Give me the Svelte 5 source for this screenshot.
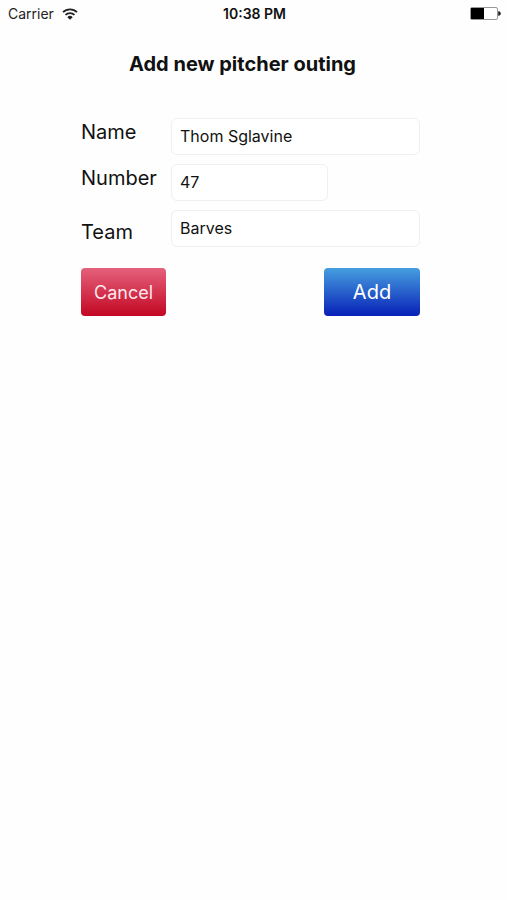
<script>
  let name = $state('Thom Sglavine');
  let number = $state('47');
  let team = $state('Barves');

  function clearForm() {
    name = '';
    number = '';
    team = '';
  }

  function handleSubmit(event) {
    event.preventDefault();
  }
</script>

<div class="screen">
  <header class="status-bar">
    <div class="carrier">
      <span>Carrier</span>
      <svg class="wifi" viewBox="0 0 16 12" aria-hidden="true">
        <path d="M1 4.2a9.9 9.9 0 0 1 14 0M3.5 6.9a6.4 6.4 0 0 1 9 0" fill="none" stroke="currentColor" stroke-width="1.8" />
        <path d="M8 11.8 5.3 9.2a3.8 3.8 0 0 1 5.4 0z" fill="currentColor" />
      </svg>
    </div>
    <span class="time">10:38 PM</span>
    <svg class="battery" viewBox="0 0 31 13" aria-hidden="true">
      <rect x="0.5" y="0.5" width="27" height="12" rx="1.5" fill="#fff" stroke="#999" />
      <rect x="1" y="1" width="13" height="11" fill="#000" />
      <path d="M28.5 4.5a2 2 0 0 1 0 4z" fill="#222" stroke="#222" stroke-width="0.6" />
    </svg>
  </header>

  <main>
    <h1>Add new pitcher outing</h1>

    <form onsubmit={handleSubmit}>
      <div class="fields">
        <label for="name">Name</label>
        <input id="name" type="text" bind:value={name} />

        <label for="number">Number</label>
        <input id="number" class="short" type="text" inputmode="numeric" bind:value={number} />

        <label for="team" class="last">Team</label>
        <input id="team" type="text" bind:value={team} />
      </div>

      <div class="actions">
        <button type="button" class="cancel" onclick={clearForm}>Cancel</button>
        <button type="submit" class="add">Add</button>
      </div>
    </form>
  </main>
</div>

<style>
  :global(body) {
    background: #fefefe;
  }

  .screen {
    min-height: 100vh;
    color: #111;
    font-family: Inter, "Liberation Sans", sans-serif;
  }

  .status-bar {
    display: grid;
    grid-template-columns: 1fr auto 1fr;
    align-items: center;
    height: 27px;
    padding: 0 6px 0 8px;
    font-size: 14px;
  }

  .carrier {
    display: flex;
    align-items: center;
    gap: 8px;
    color: #222;
  }

  .wifi {
    width: 16px;
    height: 12px;
  }

  .time {
    font-weight: 600;
  }

  .battery {
    width: 31px;
    height: 13px;
    justify-self: end;
  }

  main {
    padding: 21px 87px 0 81px;
  }

  h1 {
    margin: 0;
    padding-right: 16px;
    font-size: 20px;
    font-weight: 700;
    line-height: 32px;
    text-align: center;
    white-space: nowrap;
  }

  form {
    margin-top: 38px;
  }

  .fields {
    display: grid;
    grid-template-columns: 90px 1fr;
    row-gap: 9px;
  }

  label {
    align-self: start;
    font-size: 20px;
    line-height: 29px;
  }

  .last {
    align-self: end;
  }

  input {
    box-sizing: border-box;
    width: 100%;
    height: 37px;
    padding: 0 8px 2px;
    border: 1px solid #f0f0f0;
    border-radius: 6px;
    background: #fff;
    color: #111;
    font: inherit;
    font-size: 16px;
  }

  .short {
    width: 63%;
  }

  .actions {
    display: flex;
    justify-content: space-between;
    margin-top: 21px;
  }

  button {
    height: 48px;
    padding: 0;
    border: none;
    border-radius: 4px;
    color: #fff;
    font: inherit;
    cursor: pointer;
  }

  .cancel {
    width: 85px;
    background: linear-gradient(#e5617c, #c30722);
    color: #fde8ec;
    font-size: 18px;
  }

  .add {
    width: 96px;
    background: linear-gradient(#469fdf, #0820b8);
    font-size: 20px;
  }
</style>
